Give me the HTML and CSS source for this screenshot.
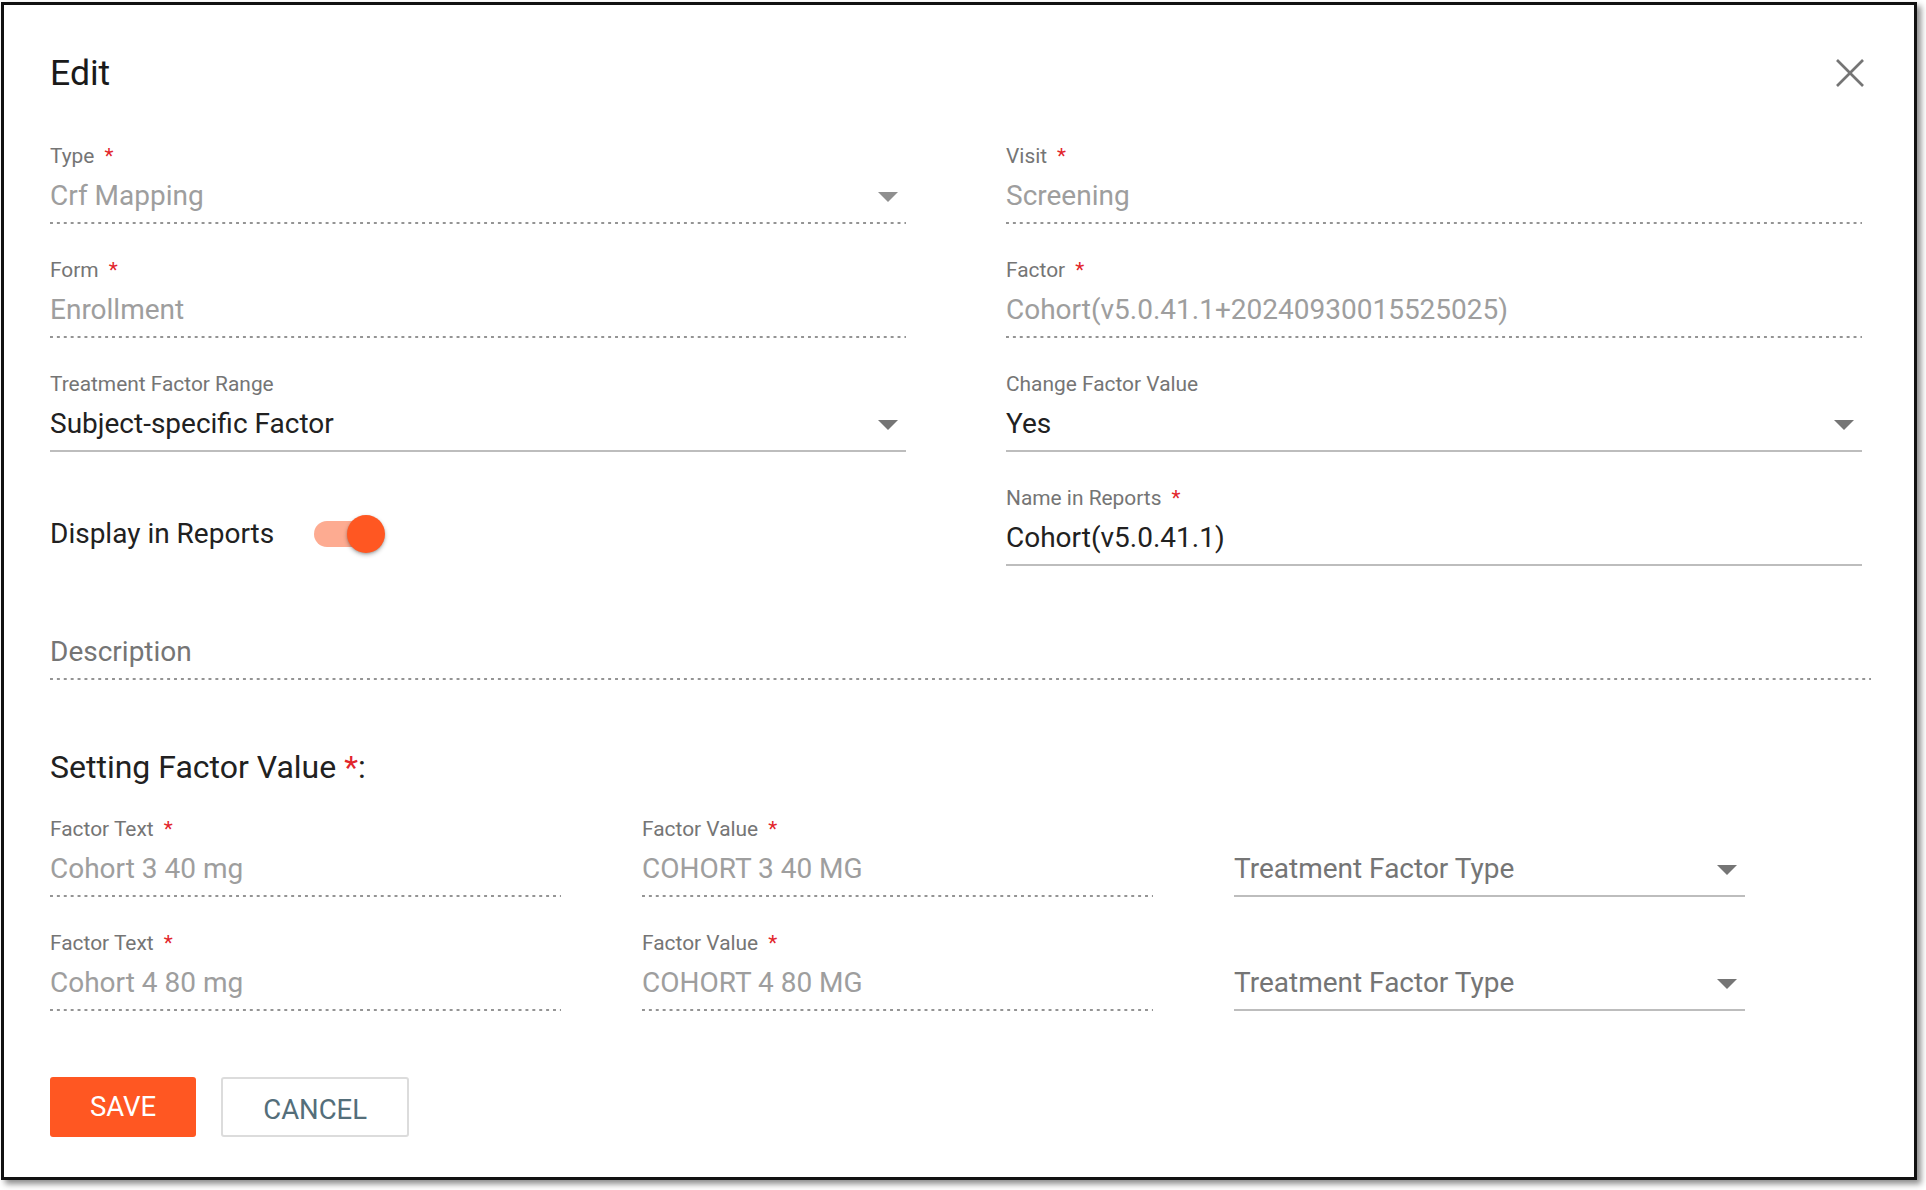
FILE: index.html
```html
<!DOCTYPE html>
<html lang="en">
<head>
<meta charset="utf-8">
<title>Edit</title>
<link rel="stylesheet" href="styles.css">
</head>
<body>
<div class="dialog">
  <div class="header">
    <div class="title">Edit</div>
    <svg class="close" width="28" height="28" viewBox="0 0 28 28" aria-label="Close">
      <line x1="1" y1="1" x2="27" y2="27"/>
      <line x1="27" y1="1" x2="1" y2="27"/>
    </svg>
  </div>

  <div class="grid-top">
    <div class="field">
      <div class="label">Type<span class="req">*</span></div>
      <div class="control dotted disabled">
        <span>Crf Mapping</span>
        <svg class="arrow light" width="20" height="10" viewBox="0 0 20 10"><polygon points="0,0 20,0 10,10"/></svg>
      </div>
    </div>
    <div class="field">
      <div class="label">Visit<span class="req">*</span></div>
      <div class="control dotted disabled"><span>Screening</span></div>
    </div>

    <div class="field">
      <div class="label">Form<span class="req">*</span></div>
      <div class="control dotted disabled"><span>Enrollment</span></div>
    </div>
    <div class="field">
      <div class="label">Factor<span class="req">*</span></div>
      <div class="control dotted disabled"><span>Cohort(v5.0.41.1+20240930015525025)</span></div>
    </div>

    <div class="field">
      <div class="label">Treatment Factor Range</div>
      <div class="control solid">
        <span>Subject-specific Factor</span>
        <svg class="arrow" width="20" height="10" viewBox="0 0 20 10"><polygon points="0,0 20,0 10,10"/></svg>
      </div>
    </div>
    <div class="field">
      <div class="label">Change Factor Value</div>
      <div class="control solid">
        <span>Yes</span>
        <svg class="arrow" width="20" height="10" viewBox="0 0 20 10"><polygon points="0,0 20,0 10,10"/></svg>
      </div>
    </div>

    <div class="switch-field">
      <span class="switch-label">Display in Reports</span>
      <div class="switch"><div class="thumb"></div></div>
    </div>
    <div class="field">
      <div class="label">Name in Reports<span class="req">*</span></div>
      <div class="control solid"><span>Cohort(v5.0.41.1)</span></div>
    </div>
  </div>

  <div class="field full">
    <div class="label"></div>
    <div class="control dotted placeholder"><span>Description</span></div>
  </div>

  <div class="section-title">Setting Factor Value <span class="req-inline">*</span>:</div>

  <div class="grid-factors">
    <div class="field">
      <div class="label">Factor Text<span class="req">*</span></div>
      <div class="control dotted disabled"><span>Cohort 3 40 mg</span></div>
    </div>
    <div class="field">
      <div class="label">Factor Value<span class="req">*</span></div>
      <div class="control dotted disabled"><span>COHORT 3 40 MG</span></div>
    </div>
    <div class="field">
      <div class="label"></div>
      <div class="control solid placeholder">
        <span>Treatment Factor Type</span>
        <svg class="arrow" width="20" height="10" viewBox="0 0 20 10"><polygon points="0,0 20,0 10,10"/></svg>
      </div>
    </div>

    <div class="field">
      <div class="label">Factor Text<span class="req">*</span></div>
      <div class="control dotted disabled"><span>Cohort 4 80 mg</span></div>
    </div>
    <div class="field">
      <div class="label">Factor Value<span class="req">*</span></div>
      <div class="control dotted disabled"><span>COHORT 4 80 MG</span></div>
    </div>
    <div class="field">
      <div class="label"></div>
      <div class="control solid placeholder">
        <span>Treatment Factor Type</span>
        <svg class="arrow" width="20" height="10" viewBox="0 0 20 10"><polygon points="0,0 20,0 10,10"/></svg>
      </div>
    </div>
  </div>

  <div class="actions">
    <button class="btn btn-save">SAVE</button>
    <button class="btn btn-cancel">CANCEL</button>
  </div>
</div>
</body>
</html>
```

FILE: styles.css
```css
html, body {
  margin: 0;
  padding: 0;
  background: #ffffff;
}

body {
  width: 1926px;
  height: 1190px;
  overflow: hidden;
  font-family: Roboto, "Noto Sans", "Liberation Sans", sans-serif;
  color: #212121;
}

.dialog {
  box-sizing: border-box;
  margin: 2px 0 0 1px;
  width: 1916px;
  height: 1178px;
  border: 3px solid #111111;
  background: #ffffff;
  box-shadow: 4px 4px 6px rgba(0, 0, 0, 0.45);
  padding: 48px 0 0 46px;
}

.header {
  display: flex;
  justify-content: space-between;
  align-items: center;
  width: 1819px;
  height: 40px;
}

.title {
  font-size: 35.6px;
  line-height: 40px;
  font-weight: 400;
  color: #1a1a1a;
}

.close {
  margin-right: 5px;
  stroke: #757575;
  stroke-width: 2.7;
  fill: none;
}

.grid-top {
  display: grid;
  grid-template-columns: 856px 856px;
  column-gap: 100px;
  margin-top: 51px;
}

.field {
  padding-bottom: 34px;
}

.field.full {
  width: 1821px;
}

.label {
  height: 24px;
  font-size: 20.9px;
  line-height: 24px;
  color: #757575;
  white-space: nowrap;
}

.req {
  color: #e2262c;
  margin-left: 10px;
}

.control {
  margin-top: 10px;
  height: 36px;
  display: flex;
  align-items: center;
  justify-content: space-between;
  font-size: 28px;
  line-height: 36px;
  color: #212121;
  white-space: nowrap;
}

.control.dotted {
  padding-bottom: 10px;
  background-image: linear-gradient(to right, rgba(0, 0, 0, 0.42) 0, rgba(0, 0, 0, 0.42) 2.6px, transparent 2.6px);
  background-size: 6.9px 2px;
  background-repeat: repeat-x;
  background-position: 0 100%;
}

.control.solid {
  padding-bottom: 8px;
  border-bottom: 2px solid #bdbdbd;
}

.control.disabled {
  color: #9e9e9e;
}

.control.placeholder {
  color: #757575;
}

.arrow {
  flex: none;
  margin-right: 8px;
  margin-top: 1px;
  fill: #757575;
}

.arrow.light {
  fill: #8f8f8f;
}

.switch-field {
  display: flex;
  align-items: center;
  height: 36px;
  padding-top: 30px;
  margin-bottom: 48px;
}

.switch-label {
  font-size: 28px;
  line-height: 36px;
  color: #212121;
}

.switch {
  display: flex;
  align-items: center;
  justify-content: flex-end;
  margin-left: 40px;
  width: 65px;
  height: 26px;
  border-radius: 13px;
  background: #fdab91;
}

.thumb {
  flex: none;
  width: 38px;
  height: 38px;
  margin-right: -6px;
  border-radius: 50%;
  background: #ff5722;
  box-shadow: 0 2px 4px rgba(0, 0, 0, 0.28), 0 1px 2px rgba(0, 0, 0, 0.14);
}

.section-title {
  margin-top: 35px;
  font-size: 32px;
  line-height: 36px;
  color: #212121;
}

.req-inline {
  color: #e2262c;
}

.grid-factors {
  display: grid;
  grid-template-columns: 511px 511px 511px;
  column-gap: 81px;
  margin-top: 32px;
}

.actions {
  display: flex;
  gap: 25px;
  margin-top: 32px;
}

.btn {
  box-sizing: border-box;
  height: 60px;
  padding: 0 40px;
  font-family: Roboto, "Noto Sans", "Liberation Sans", sans-serif;
  font-size: 27.5px;
  font-weight: 400;
  line-height: 60px;
  border-radius: 3px;
  cursor: pointer;
}

.btn-save {
  border: none;
  background: #ff5722;
  color: #ffffff;
}

.btn-cancel {
  border: 2px solid #dcdcdc;
  background: #ffffff;
  color: #546e7a;
  line-height: 58px;
  padding-top: 2px;
}
```
